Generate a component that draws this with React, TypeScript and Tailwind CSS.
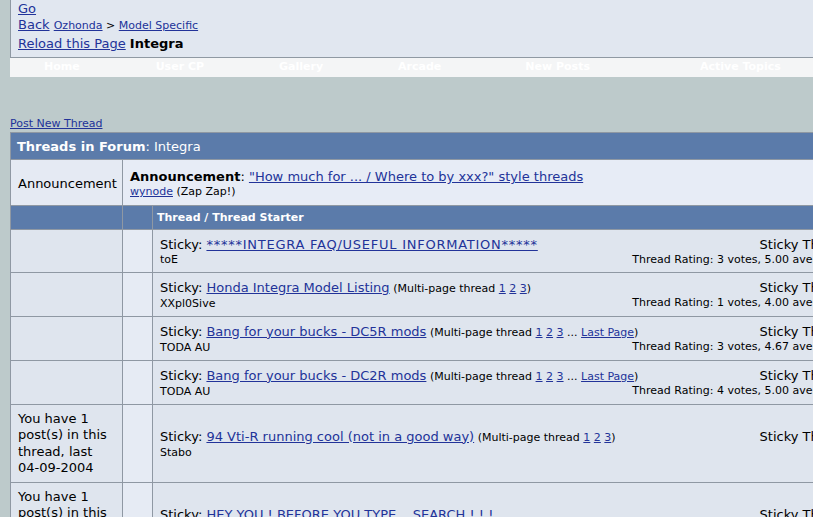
import React from "react";

const link = "text-[#223399] underline";

type Row = {
  status?: string[];
  title: string;
  wide?: boolean;
  pages?: boolean;
  lastPage?: boolean;
  starter: string;
  rating?: string;
  h: string;
};

const rows: Row[] = [
  { title: "*****INTEGRA FAQ/USEFUL INFORMATION*****", wide: true, starter: "toE", rating: "Thread Rating: 3 votes, 5.00 average.", h: "h-[42px]" },
  { title: "Honda Integra Model Listing", pages: true, starter: "XXpl0Sive", rating: "Thread Rating: 1 votes, 4.00 average.", h: "h-[43px]" },
  { title: "Bang for your bucks - DC5R mods", pages: true, lastPage: true, starter: "TODA AU", rating: "Thread Rating: 3 votes, 4.67 average.", h: "h-[43px]" },
  { title: "Bang for your bucks - DC2R mods", pages: true, lastPage: true, starter: "TODA AU", rating: "Thread Rating: 4 votes, 5.00 average.", h: "h-[43px]" },
  {
    status: ["You have 1", "post(s) in this", "thread, last", "04-09-2004"],
    title: "94 Vti-R running cool (not in a good way)",
    pages: true,
    starter: "Stabo",
    h: "h-[77px]",
  },
  {
    status: ["You have 1", "post(s) in this", "thread, last", "04-09-2004"],
    title: "HEY YOU ! BEFORE YOU TYPE... SEARCH ! ! !",
    starter: "",
    h: "h-[77px]",
  },
];

const navItems = [
  { label: "Home", ml: "ml-[34px]" },
  { label: "User CP", ml: "ml-[76px]" },
  { label: "Gallery", ml: "ml-[75px]" },
  { label: "Arcade", ml: "ml-[75px]" },
  { label: "New Posts", ml: "ml-[84px]" },
  { label: "Active Topics", ml: "ml-[110px]" },
];

function ThreadRow({ row }: { row: Row }) {
  return (
    <tr className={row.h}>
      <td className="bg-[#dfe5ee] pl-[7px] pr-[5px] align-middle text-[13px] leading-[16.5px]">
        {row.status?.map((s) => (
          <div key={s}>{s}</div>
        ))}
      </td>
      <td className="bg-[#e6ebf4]" />
      <td className="bg-[#dfe5ee] px-[7px] pt-[1px] align-middle">
        <div className="flex justify-between">
          <div className="min-w-0 shrink">
            <div className="text-[13px] leading-[16px] whitespace-nowrap">
              Sticky: <a className={`${link} ${row.wide ? "tracking-[0.75px]" : ""}`}>{row.title}</a>
              {row.pages && (
                <span className="text-[11px]">
                  {" "}
                  (Multi-page thread <a className={link}>1</a> <a className={link}>2</a>{" "}
                  <a className={link}>3</a>
                  {row.lastPage && (
                    <>
                      {" "}
                      ... <a className={link}>Last Page</a>
                    </>
                  )}
                  )
                </span>
              )}
            </div>
            <div className="text-[11px] leading-[14px]">{row.starter}</div>
          </div>
          <div className="flex shrink-0 flex-col items-end whitespace-nowrap">
            <div className="text-[13px] leading-[16px]">Sticky Thread</div>
            {row.rating ? (
              <div className="mr-[7px] text-[11px] leading-[14px]">{row.rating}</div>
            ) : (
              <div className="h-[14px]" />
            )}
          </div>
        </div>
      </td>
    </tr>
  );
}

export default function App() {
  return (
    <div className="w-[813px] h-[517px] overflow-hidden bg-[#bdcacb] font-['DejaVu_Sans',Verdana,sans-serif] text-black">
      <div className="ml-[10px] h-[58px] w-[900px] border-l border-b border-[#8f99a3] bg-[#e1e7f0] pl-[7px] pt-[1px]">
        <div className="text-[13px] leading-[16px]">
          <a className={link}>Go</a>
        </div>
        <div className="text-[13px] leading-[16px]">
          <a className={link}>Back</a>{" "}
          <span className="text-[11px]">
            <a className={link}>Ozhonda</a> &gt; <a className={link}>Model Specific</a>
          </span>
        </div>
        <div className="mt-[2px] text-[13px] leading-[16px]">
          <a className={link}>Reload this Page</a> <b>Integra</b>
        </div>
      </div>
      <div className="ml-[10px] flex h-[19px] w-[900px] items-center bg-[#f4f5f6] text-[11px] font-bold text-white">
        {navItems.map((n) => (
          <span key={n.label} className={n.ml}>
            {n.label}
          </span>
        ))}
      </div>

      <div className="ml-[10px] mt-[40px] text-[11px] leading-[14px]">
        <a className={link}>Post New Thread</a>
      </div>

      <table className="ml-[10px] mt-[1px] w-[846px] table-fixed border-separate border-spacing-[1px] bg-[#8f98a3]">
        <colgroup>
          <col className="w-[111px]" />
          <col className="w-[29px]" />
          <col />
        </colgroup>
        <tbody>
          <tr className="h-[26px]">
            <td colSpan={3} className="bg-[#5b7baa] px-[6px] pt-[2px] text-[13px] text-white">
              <b>Threads in Forum</b>: Integra
            </td>
          </tr>
          <tr className="h-[45px]">
            <td className="bg-[#e5eaf3] pl-[7px] pr-[5px] pt-[3px] text-[13px] whitespace-nowrap">Announcement</td>
            <td colSpan={2} className="bg-[#e7ecf6] px-[7px] pt-[3px]">
              <div className="text-[13px] leading-[16px]">
                <b>Announcement</b>:{" "}
                <a className={link}>"How much for ... / Where to by xxx?" style threads</a>
              </div>
              <div className="text-[11px] leading-[14px]">
                <a className={link}>wynode</a> (Zap Zap!)
              </div>
            </td>
          </tr>
          <tr className="h-[23px]">
            <td className="bg-[#5b7baa]" />
            <td className="bg-[#5b7baa]" />
            <td className="bg-[#5b7baa] px-[4px] pt-[1px] text-[11px] font-bold text-white">
              Thread / Thread Starter
            </td>
          </tr>
          {rows.map((r, i) => (
            <ThreadRow key={i} row={r} />
          ))}
        </tbody>
      </table>
    </div>
  );
}
